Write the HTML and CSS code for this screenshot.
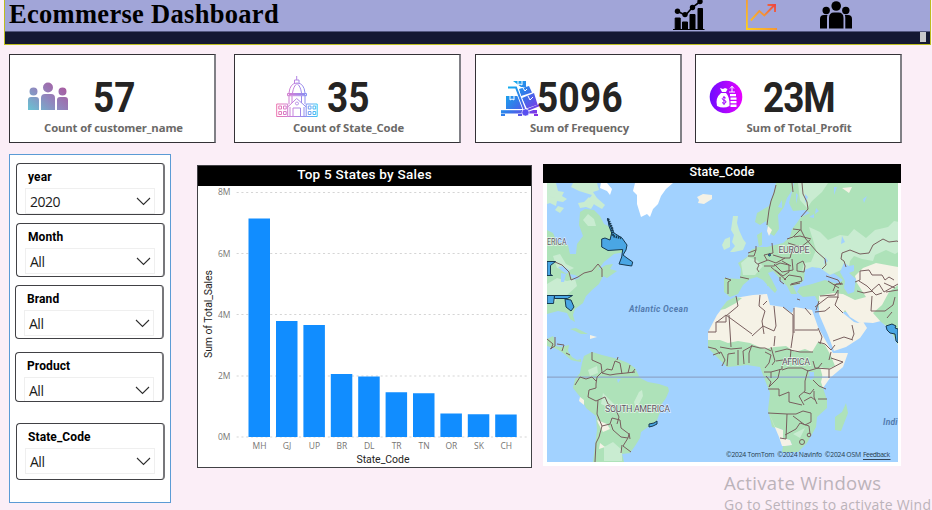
FILE: index.html
```html
<!DOCTYPE html>
<html lang="en">
<head>
<meta charset="utf-8">
<title>Ecommerse Dashboard</title>
<link rel="stylesheet" href="styles.css">
</head>
<body>
<header class="banner">
  <div class="banner-top">
    <h1>Ecommerse Dashboard</h1>
    <nav class="banner-icons">
      <svg width="32" height="31" viewBox="0 0 32 31"><path d="M0 29.5h31.5M2.200 18h5v11h-5zM9.500 22h5v7h-5zM17 14.500h5V29h-5zM25 8.500h4.500V29H25z" stroke="#000" stroke-width="1"/><path d="M4.500 11.300l8 4 7-8 7.500-5.500" fill="none" stroke="#000" stroke-width="1.700"/><circle cx="4.500" cy="11.300" r="2.700"/><circle cx="12" cy="14.600" r="2.700"/><circle cx="19.500" cy="7.500" r="2.700"/><circle cx="27" cy="1.600" r="2.700"/></svg>
      <svg width="32" height="31" viewBox="0 0 32 31"><defs><linearGradient id="sun" x1="0" y1="30" x2="30" y2="3" gradientUnits="userSpaceOnUse"><stop stop-color="#ffd21c"/><stop offset=".55" stop-color="#f59a35"/><stop offset="1" stop-color="#ec3b43"/></linearGradient></defs><path d="M0 0h1.800v28H31v2H0z" fill="url(#sun)"/><path d="M4.800 20.500l8.500-9.500 5 4.500L28 5.500M21.500 5H29v7" fill="none" stroke="url(#sun)" stroke-width="1.900"/></svg>
      <svg class="team" width="32" height="31" viewBox="0 0 32 31"><circle cx="16.200" cy="6" r="4.800"/><circle cx="6.200" cy="10.500" r="3.700"/><circle cx="25.800" cy="10.500" r="3.700"/><path d="M9 28.500V18q0-5.500 5-5.500h4.500q5 0 5 5.500v10.500zM0 28V19q0-4 4-4h3.500q-.5 1-.5 3v10.500H0zM32 28V19q0-4-4-4h-3.200q.5 1 .5 3v10.500H32z"/></svg>
    </nav>
  </div>
  <div class="banner-bar"><span class="thumb"></span></div>
</header>

<section class="cards">
  <article class="card">
    <svg class="icon" width="42" height="30" viewBox="0 0 42 30"><defs><linearGradient id="ppl" x1="0" y1="1" x2="1" y2=".2"><stop stop-color="#69c3d3"/><stop offset=".5" stop-color="#9087be"/><stop offset="1" stop-color="#aa589f"/></linearGradient></defs><path fill="url(#ppl)" d="M21 .5a5 5 0 1 1 0 10 5 5 0 0 1 0-10M6.500 5.500a4 4 0 1 1 0 8 4 4 0 0 1 0-8M35.500 5.500a4 4 0 1 1 0 8 4 4 0 0 1 0-8M1 28V18q0-3 3-3h5q3 0 3 3v10zM14 28V16q0-4 4-4h6q4 0 4 4v12zM30 28V18q0-3 3-3h5q3 0 3 3v10z"/></svg>
    <div class="number n1">57</div><div class="label l1">Count of customer_name</div>
  </article>
  <article class="card">
    <svg class="icon" width="42" height="42" viewBox="0 0 42 42"><defs><linearGradient id="dome" gradientUnits="userSpaceOnUse" x1="0" x2="42" y1="0" y2="0"><stop stop-color="#ed75ae"/><stop offset=".4" stop-color="#c582dd"/><stop offset=".7" stop-color="#8b8ef0"/><stop offset="1" stop-color="#36ccf5"/></linearGradient></defs><path fill="none" stroke="url(#dome)" stroke-width="1" d="M.7 28h11v12.500H.7zM30.200 28h11v12.500h-11zM11.700 40.500h18.500M2.800 30h2.700v3H2.800zM7.500 30h2.700v3H7.500zM2.800 35.500h2.700v3H2.800zM7.500 35.500h2.700v3H7.500zM32.300 30H35v3h-2.700zM37 30h2.700v3H37zM32.300 35.500H35v3h-2.700zM37 35.500h2.700v3H37zM11.700 31l9-8.500 9.500 8.500M13 28V18.500h16V28M11.500 17.500h19v2.200h-19zM13 17q1-10 8-10t8 10M16.500 17q1-7 4.500-9.500 3.500 2.500 4.500 9.500M18.500 7V4h4.500v3M20.700 0v4M16 20v7M25.500 20v7M17 40.500V32h7.500v8.500M21 26a1.500 1.500 0 1 1-.1 0M14 31v9.500M28 31v9.500"/></svg>
    <div class="number n2">35</div><div class="label l2">Count of State_Code</div>
  </article>
  <article class="card">
    <svg class="icon" width="42" height="36" viewBox="0 0 42 36"><defs><linearGradient id="cart" gradientUnits="userSpaceOnUse" x1="4" x2="37" y1="3" y2="32"><stop stop-color="#08bbef"/><stop offset=".5" stop-color="#3776e9"/><stop offset="1" stop-color="#8530e6"/></linearGradient></defs><path fill="url(#cart)" d="M12 0h13v6h-5zM18 8l10-3 3 6.500-11 3.500zM5 15h12l6 13H5zM21 17l12-5 4 13-11 3zM0 29h36v3.500H0zM0 33h4v2H0zM17 33h4v2h-4zM33 33h4v2h-4z"/><path fill="none" stroke="#fff" stroke-width="3.600" d="M7 6.500h8L24 30l17-6"/><path fill="none" stroke="url(#cart)" stroke-width="2" d="M7 6.500h8L24 30l17-7"/><path fill="none" stroke="#fff" stroke-width="1" d="M17 0v4l2-1 2 1V0M9 15v4l2-1 2 1v-4M27 15l2 4 3-3M22 7l2 3 2-2M0 28.700h20"/><circle cx="24.500" cy="31.500" r="3.600" fill="#594ff0" stroke="#fff" stroke-width=".6"/></svg>
    <div class="number n3">5096</div><div class="label l3">Sum of Frequency</div>
  </article>
  <article class="card">
    <svg class="icon" width="34" height="34" viewBox="0 0 34 34"><defs><linearGradient id="mon"><stop stop-color="#6d0cff"/><stop offset="1" stop-color="#e900ff"/></linearGradient></defs><circle cx="17" cy="17" r="16.300" fill="url(#mon)"/><path fill="#fff" d="M11 8l3 1 2-1 2.500 1-1.500 3h-4zM12 13h5q4 4 3.500 13-6 3-12.500 0-2-8 4-13zM21 14h6v2.300h-6zM21.500 17.500h6v2.300h-6zM21.500 21h6v2.300h-6zM21.500 24.500h6V27h-6z"/><path d="M23 12V6.500m-2 2l2-2.300 2 2.300M20 12h6" stroke="#fff" stroke-width="1" fill="none"/><path d="M16.800 18q-3-1.500-3.500.5 0 1.500 2 1.800t1.700 2q-1 2-4 .4M15 16v9" fill="none" stroke="#a000ff"/></svg>
    <div class="number n4">23M</div><div class="label l4">Sum of Total_Profit</div>
  </article>
</section>

<main class="board">
  <aside class="filters">
    <div class="slicer s-year"><h2>year</h2><div class="drop">2020<svg width="15" height="9" viewBox="0 0 15 9"><path d="M1 1l6.500 6.500L14 1"/></svg></div></div>
    <div class="slicer s-month"><h2>Month</h2><div class="drop">All<svg width="15" height="9" viewBox="0 0 15 9"><path d="M1 1l6.500 6.500L14 1"/></svg></div></div>
    <div class="slicer s-brand"><h2>Brand</h2><div class="drop">All<svg width="15" height="9" viewBox="0 0 15 9"><path d="M1 1l6.500 6.500L14 1"/></svg></div></div>
    <div class="slicer s-product"><h2>Product</h2><div class="drop">All<svg width="15" height="9" viewBox="0 0 15 9"><path d="M1 1l6.500 6.500L14 1"/></svg></div></div>
    <div class="slicer s-state"><h2>State_Code</h2><div class="drop">All<svg width="15" height="9" viewBox="0 0 15 9"><path d="M1 1l6.500 6.500L14 1"/></svg></div></div>
  </aside>

  <section class="chart">
    <h2>Top 5 States by Sales</h2>
    <svg width="333" height="281" viewBox="198 186 333 281">
      <g class="grid"><path d="M237 192.500h291M237 253.500h291M237 314.500h291M237 376h291M237 437h291"/></g>
      <g class="bars"><path d="M248.500 218.500h21.500V437h-21.500zM276 321h21.500v116H276zM303.400 325h21.500v112h-21.500zM330.800 374h21.500v63h-21.500zM358.200 376.500h21.500V437h-21.500zM385.600 392.200h21.500V437h-21.500zM413 393.200h21.500V437H413zM440.400 413.400h21.500V437h-21.500zM467.800 414.200h21.500V437h-21.500zM495.200 414.400h21.500V437h-21.500z"/></g>
      <g class="ticks end"><text x="230.500" y="195.300">8M</text><text x="230.500" y="257">6M</text><text x="230.500" y="318">4M</text><text x="230.500" y="379">2M</text><text x="230.500" y="440">0M</text></g>
      <g class="ticks mid"><text x="259.500" y="449">MH</text><text x="287" y="449">GJ</text><text x="314.500" y="449">UP</text><text x="341.800" y="449">BR</text><text x="369.200" y="449">DL</text><text x="396.600" y="449">TR</text><text x="424" y="449">TN</text><text x="451.400" y="449">OR</text><text x="479" y="449">SK</text><text x="506.300" y="449">CH</text></g>
      <g class="axis mid"><text x="383" y="463" textLength="53">State_Code</text><text transform="translate(211.500 314) rotate(-90)" textLength="88">Sum of Total_Sales</text></g>
    </svg>
  </section>

  <section class="map">
    <h2>State_Code</h2>
    <svg width="351" height="279" viewBox="547 183 351 279">
      <rect x="547" y="183" width="351" height="279" fill="#a2d2ff"/>
      <g class="land">
        <path d="M547 230L553 233 557 242 568 245 570 254 576 254 577 244 583 236 579 225 580 212 585 209 594 210 600 216 604 224 608 226 616 236 626 244 625 252 614 254 604 262 598 270 606 265 613 264 610 269 617 271 607 278 603 276 599 284 592 290 586 296 583 303 575 309 573 315 575 322 570 319 567 313 558 311 547 314z"/>
        <path class="pale" d="M547 183h9l2 8 6 1-2 4 5 3-4 3-6-1-1 5-6-3-3 1zM573 183h24l2 7-6 2 4 6 8 7-3 4-7-4-6-6 3-4-13-4-8-4zM589 197l5 7-3 5-5-2-6 1-2-5 6-1zM558 206l6 2-4 5-5-3z"/>
        <path d="M547 339l6-3 2 4 0 6 6 1 8-2-1 6 4 6 5 3 4-1 0 3-6-1-4-1-8-7-6-4-10-3zM570 329l6-1 6 3 6 3-7 0-6-3z"/>
        <path d="M582 363L584 356 592 352 602 355 618 359 628 363 635 368 640 378 648 382 659 384 668 387 669 391 666 398 661 405 660 412 656 423 648 427 641 432 640 438 635 446 630 453 622 454 624 462 593 462 597 430 596 416 586 408 581 398 573 388 575 379 580 373z"/>
        <path d="M776 183L773 195 769 206 757 213 755 222 760 225 766 221 769 233 774 236 779 229 778 215 784 207 787 198 793 189 793 183z"/>
        <path d="M794 183L792 192 789 203 793 211 805 210 810 213 801 217 796 224 792 229 790 237 783 243 767 247 759 247 757 235 762 232 762 245 751 250 747 257 738 263 741 269 740 279 724 278 724 292 730 297 738 294 743 285 750 279 757 277 763 280 770 288 775 293 777 290 772 280 768 273 773 271 780 279 787 286 791 294 797 294 793 286 800 284 804 280 805 268 811 264 816 268 822 264 832 272 843 280 838 284 825 280 812 284 800 287 797 292 803 297 815 296 818 302 819 312 898 312 898 183z"/>
        <path class="pale" d="M733 216l5 0-1 7 2 7 4 9 3 4-3 7-9 2-4 0 5-6-3-4 2-7-3-5zM725 239l5-2 0 10-6 3-2-5z"/>
        <path d="M846 403l2 10-7 18-6-1 0-13 7-5zM767 280l3 0 0 6-3 0z"/>
      </g>
      <g class="dry">
        <path d="M717 315L726 303 735 298 753 295 767 294 770 305 783 307 792 313 795 307 812 310 818 327 827 343 833 353 848 353 843 367 830 378 823 388 800 370 770 355 708 345 708 332z"/>
        <path d="M819 296L833 293 843 294 855 300 866 297 857 283 855 276 863 268 876 263 898 267 898 345 893 335 887 327 881 321 873 323 858 322 850 317 845 310 843 313 854 322 858 323 862 320 867 328 860 338 846 347 834 351 828 335 819 314z"/>
        <path d="M697 197l6-3 9 1 0 4-8 5-6-1 1-3zM590 335l7 2-7 2z"/>
      </g>
      <g class="green">
        <path d="M708 340L720 340 728 343 738 341 750 343 757 346 765 349 775 347 786 346 795 352 805 349 812 352 818 342 825 345 831 356 835 366 824 370 821 382 823 388 827 400 827 408 817 417 816 427 807 443 798 452 782 452 783 446 792 445 790 440 783 438 783 430 772 427 768 410 770 393 763 375 760 367 747 365 738 366 727 367 715 355 708 348z"/>
        <path d="M720 310l7-9 8-4 7 1-6 5-11 6zM873 313L882 305 889 292 898 285 898 345 889 328 881 322zM839 283l8 5-4 6-7-2z"/>
      </g>
      <g class="pale">
        <path d="M798 183h30l-6 9-10 9-5 7-7-8zM809 227l11 5 8 8 12-5 8 1 6-7 12 9 9-8 13-3 6-6 14 3v22l-13 8-9-4-11 5-2 6-11-2-8-3-4 5-2 12-7-3-11 5-10-7-8-1-10 4 2-8 7-1 5-12-3-10zM741 263l7-6 9 3 6 6-8 9-12 0zM547 284l10-6 10 3 8-2 2 7-11 10-8 0-3 6-8-1zM553 256l7-2 6 10 8 4-6 3-11-3zM552 189l5 4-3 5-5-2zM588 214l6 5 2 7-8 0-5-6zM604 447l9-5 9 8v11h-18zM588 370l9-4 1 7-8 3zM603 393l6 6 5 5-1 8-5-5-7-3zM634 402l5-10 3-2 1 6-7 14zM793 434l12-6-5 10z"/>
      </g>
      <g class="cream"><path d="M580 397l4 3 0 5-5-4zM597 420l10 4 3 5-7 3-5-9zM600 443l5 4-6 2zM842 188l10-1-3 6zM768 226l4 4-3 6-2-5zM820 367l8 2 1 9-6 0zM768 411l7 16 8 3 0 8 7 2 2 5-7 1-3 0-3-9z"/></g>
      <g fill="#a2d2ff"><path d="M558 267l5-1 6 4-2 4-5-3zM569 274l6 1 5 3-6 2zM561 273l5 1-2 8-3 0zM809 217l5-3 0 4zM816 208l3 3-4 3zM844 263l5 3 5-1 0 6-5 2 7 6-2 13-6 2-4-6 1-7-5-9zM825 257l3 4-4 3zM842 236l3 6-4 2zM617 379l4 0-3 4zM778 207l4-7 0 8zM805 194l3 3-3 6zM809 372l5 0 0 6-4 2zM796 193l2 2-2 9zM834 187l3 0-3 8zM863 199l4-3-3 7z"/></g>
      <g fill="#fff"><path d="M635 183h38l-7 6-5 7-3 8-5 5-3 8-3-3-6 3-4-13 0-9-4-4zM601 183h6l5 6-2 6-3-4-7-3z"/></g>
      <path class="equator" d="M547 377.200h351"/>
      <g class="borders">
        <path d="M555 262l7 3 7 7 2 8 7-3 6-4 8-2 6-7 4 5v8M547 339l6 5-2 5M555 337l0 9-5 3M557 344l7 1-2 6M566 353l4 2"/>
        <path d="M592 352l0 8 9 4 1 8-5 5-1 7 0 4-7 2-1 7 8 4 9-4 3 7 7 4 4 9-2 7M575 385l5-8 6 2 6-2 4 4M602 373l5-4 5 1 3-9 5 2 2 11M617 360l1-3M628 373l2-8M632 373l3-4M602 373l8 2 6-1 10-1 9-1M598 400l-1 14 5 12-3 11-3 6-1 19M602 426l8-2 2-6 8 2 1 8 8 6-1 4-7-1-8-7-2-6M628 438l-5 8 8 6M629 433l1 6M622 445l-1 8"/>
        <path d="M776 185l-2 8-3 8-2 9-2 15M792 183l1 9M802 183l1 11 4 8 1 7-7 8M801 221v9l-8-1M800 230l-7 7-6 2M801 230l4 8 6 7 6 7 8 7 1 6-4 4M811 239l-11-3-6 1M810 240l-9 7-13-4M748 253l8-3 0-4M756 250l-2 6-6 0M755 257l0 5 4 3-2 4 2 3M772 243l1 10-9 2 3 5M773 255l10 3 7 0 3-11M758 264l10-4 8 3 9-5M764 266l10 0 6-3 9 2 0 7-6 4-8-6M774 264l8 8 11-2-1-11M782 261l9 5M771 267l15 13M780 277l0 4 4 3M784 280l5-5 12 2 1 4-11 3M797 264l6-3 2 5-1 6-7-1zM790 285l10-2M725 278l6 2-3 2 0 12M740 277l9 2M846 267l-2-6-3-2 1-6 8-3 10 4 9-1 4-8 10-6 6 3 8-1 5 3M855 282l5-2 0-9 9-1 3 5 10 0 3 5 4-3 5 3M859 281l8 5 9 9 6-2M857 291l7 2 9-2M871 291l8-7 5 8 14-8M884 283l11 5M886 292l12-2M826 276l12 4 3 5M828 281l11 7M834 285l8-2M833 291l3-7 7 0M820 296l15-1 3-5 0 8M815 307l13-10 10 0-3 8 8 8M815 312l10-1 5-4M800 300l-3-1M819 301l-3 9M872 296l-1 15 14 0 8-6 2-8M887 318l5-6"/>
        <path d="M708 332h8v-10h10v-6l12-10-2-10M729 315l2 32M717 322l9-7 26 19M760 295l-1 11 6 5-3 10 2 13M752 336l11-10 11 5 2-5-2-20M767 301l-4 4M783 307l10 8v19M794 308v25M795 330h23M818 328l4 9-2 7M775 336l-1 10M793 334l-2 14M708 347l8 2 4 5M720 347l11 2 11-1M713 355l8-3 4 8-3 6M727 366l1-12 7-1M738 365l0-15M744 364l-1-13 9-5M749 363l0-10 3-8M752 346l8 2 5 0 6 3M765 352l6 3-2 8-4 5M771 347l4 14-3 4M775 352l12-3 4 1-1 10M776 361l7-1 6 2M764 372l7 0 0 6M766 376l5 6-2 5M771 372l11-3 0-3M780 369l-2 9-9 9M768 389h11l0 7 10-4 0 10 13 3M782 370l6-2 14 0 6 3M808 370l-3 11 0 10-6 5 5 9M808 371l10-3 4-5M813 380l6 6 7 3M814 391l0 6 3 7M804 401l7-4 4 3M804 392l6 2 4-5M818 399l9 0M768 413l19 1 9 0 7-3 8 2 0 9-6 3-12-9M787 414l-1 25-6-1M785 435l11-6 4-6M800 423l9 3 1 8M818 342l7 2 6 6 4-5M831 352l-2 8M831 358l12 4-13 7-15-1-2-7M829 369l0 9M790 350l10 2 13 0M833 341l11-4 9 3M852 339l2-5-2-9M811 315l-6-7"/>
        <circle cx="802" cy="442" r="2.500"/><circle cx="809" cy="435" r="1.800"/>
      </g>
      <g class="regions"><path d="M607.700 218L610 225 614 233 622 238 627 245 626 250 623 255 627 258 632.700 262 631.700 266 625 265 619 264 621.700 257 622.700 249.500 608 250.500 601.700 247 601.700 239 605 238 610 240 611.700 233 609 226zM547 261.500h8.500l-5 4 0 9 2 1H547zM547 295.500h7.500l-1 8H547zM554.500 295.500h18l-5 3-13 0zM565 299l6 1 3 7-3 4-5-4zM649 427l0-3 5-1 3-2 0 3-4 2zM886 326l6-2 4 2-1 2 3 1v14l-2-2-1-7-5-1-3-3z"/><path d="M608 219l4 9 1 8 8 2" fill="none" stroke-dasharray="1.500 .8" stroke-width="2.500"/><circle cx="769.500" cy="255" r="1"/></g>
      <g class="places"><text x="547" y="244.500" textLength="19.500" lengthAdjust="spacingAndGlyphs">ERICA</text><text x="778.500" y="252.500" textLength="31">EUROPE</text><text x="605" y="411.500" textLength="65">SOUTH AMERICA</text><text x="782" y="365" textLength="28">AFRICA</text></g>
      <g class="seas"><text x="629" y="311.500" textLength="59">Atlantic Ocean</text><text x="883" y="424.500" textLength="14.500">Indi</text></g>
      <g class="credit"><text x="726" y="457.300" textLength="135">©2024 TomTom &#160;©2024 NavInfo &#160;©2024 OSM</text><text x="863" y="457.300" textLength="27">Feedback</text><path d="M863 459.500h27.500" stroke="#34465a"/></g>
    </svg>
  </section>
</main>
<div class="watermark"><p class="big">Activate Windows</p><p>Go to Settings to activate Wind</p></div>
</body>
</html>
```
FILE: styles.css
```css
* { box-sizing: border-box; }
body { margin: 0; width: 932px; height: 510px; overflow: hidden; background: #fbeef7; font-family: "Open Sans", sans-serif; position: relative; }
h1, h2, p { margin: 0; }
svg { display: block; }

.banner { margin: 0 1px 0 4px; height: 45px; border: 1px solid #bdbd20; border-top: 0; background: #141833; }
.banner-top { display: flex; height: 32px; background: #a1a5d8; border-bottom: 1px solid #53577f; }
h1 { width: 668px; padding-left: 4px; font: bold 26.5px/28px "Liberation Serif", serif; letter-spacing: .3px; white-space: nowrap; color: #000; }
.banner-icons { display: flex; gap: 41px; }
.team { margin-left: 1px; }
.banner-bar { display: flex; justify-content: flex-end; padding-right: 4px; }
.thumb { width: 6px; height: 10px; background: #c8c8cb; }

.cards { display: grid; grid-template-columns: 225px 241px 220px 207px; padding: 9px 0 0 9px; height: 98px; }
.card { display: grid; grid-template: 65px 1fr / 84px 1fr; height: 89px; margin-right: 18px; background: #fff; border: 1px solid #333136; border-right: 2px solid #808086; }
.card:nth-child(2) { margin-right: 14px; }
.card:nth-child(3) { margin-right: 13px; }
.card:nth-child(4) { margin-right: 0; }
.icon { margin: 27px 0 0 17px; }
.card:nth-child(2) .icon { margin: 21px 0 0 41px; }
.card:nth-child(3) .icon { margin: 26px 0 0 25px; }
.card:nth-child(4) .icon { margin: 25px 0 0 13px; }
.number { font: 700 42px/38px Roboto, sans-serif; padding-top: 24px; color: #252423; white-space: nowrap; transform-origin: 0 0; transform: scaleX(.88); }
.n1 { margin-left: -1px; }
.n2 { padding-left: 9px; }
.n3 { margin-left: -23px; letter-spacing: .3px; }
.n4 { margin-left: -17px; letter-spacing: -1.2px; }
.label { grid-column: 1 / -1; font-weight: 700; font-size: 11.3px; line-height: 13px; padding-top: 1px; color: #6b6967; text-align: center; white-space: nowrap; letter-spacing: -.12px; }
.l1, .l2, .l3 { padding-left: 3px; }
.l4 { padding-left: 2px; }

.board { display: flex; align-items: flex-start; padding: 11px 0 0 9px; }
.filters { width: 162px; height: 349px; background: #fff; border: 1px solid #5b9bd5; padding: 8px 6px 0; }
.slicer { width: 149px; height: 52px; border: 1px solid #414145; border-right: 2px solid #77777b; border-radius: 4px; padding: 6px 8px 0 8px; overflow: hidden; }
.slicer h2 { font: 700 12px/14px Roboto, sans-serif; letter-spacing: .1px; color: #000; margin: 0 0 4px 3px; }
.drop { display: flex; justify-content: space-between; align-items: center; height: 26px; width: 130px; border: 1px solid #efefef; padding: 0 3px 0 4px; font-size: 14px; letter-spacing: -.5px; color: #1b1b1b; }
.drop svg { fill: none; stroke: #303030; stroke-width: 1.1; }
.s-month { height: 54px; margin-top: 8px; }
.s-brand { height: 54px; margin: 8px 0 0 -1px; }
.s-product { height: 50px; margin: 13px 0 0 -1px; }
.s-state { height: 57px; margin-top: 21px; }

.chart { width: 335px; height: 303px; margin: 11px 0 0 26px; background: #fff; border: 1px solid #414145; }
.chart h2, .map h2 { background: #000; color: #fff; font: 500 13.5px/17px Roboto, sans-serif; text-align: center; }
.chart h2 { height: 20px; letter-spacing: .25px; }
.grid path { stroke: #d5d5d5; stroke-width: 1; stroke-dasharray: 1.3 3.5; stroke-linecap: round; }
.bars path { fill: #118dff; }
.ticks { font: 8.5px "Open Sans", sans-serif; fill: #777573; }
.axis { font: 400 10.5px Roboto, sans-serif; fill: #252423; }
.end { text-anchor: end; }
.mid { text-anchor: middle; }

.map { width: 358px; height: 302px; margin: 10px 0 0 11px; background: #fff; }
.map h2 { height: 19px; line-height: 16px; font-size: 12.5px; letter-spacing: .1px; }
.map svg { margin-left: 4px; }
.land path, .green path { fill: #aee2b9; }
.land .pale, .pale path { fill: #c9ecd1; }
.dry path, .cream path { fill: #f5f2e6; }
.equator { stroke: #8ba5cb; stroke-width: 1.2; }
.borders { fill: none; stroke: #785f5e; stroke-width: 1; stroke-linejoin: round; }
.regions { fill: #4aa6e4; stroke: #17384f; stroke-width: 1; }
.places { font: 9px Roboto, sans-serif; fill: #625866; stroke: #fff; stroke-width: 1.4; stroke-opacity: .65; paint-order: stroke; }
.seas { font: italic 700 8.5px Roboto, sans-serif; fill: #537caf; }
.credit { font: 6.800px "Open Sans", sans-serif; fill: #263c4e; stroke-width: 1; }

.watermark { position: absolute; left: 724px; top: 470px; color: #bbb3ba; font-size: 14px; line-height: 20px; letter-spacing: .24px; white-space: nowrap; }
.watermark .big { font-size: 18.500px; line-height: 25px; letter-spacing: .35px; }
```
